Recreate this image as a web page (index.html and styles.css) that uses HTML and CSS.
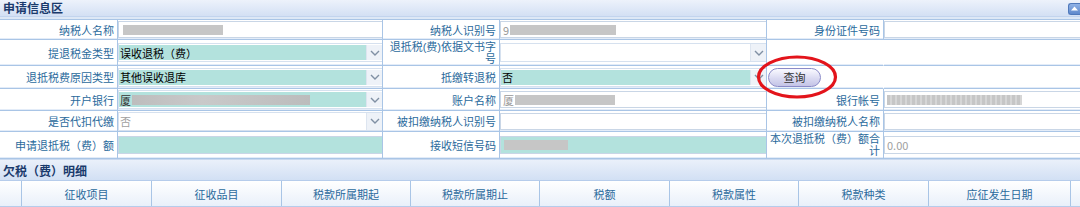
FILE: index.html
```html
<!DOCTYPE html>
<html lang="zh-CN">
<head>
<meta charset="utf-8">
<link rel="stylesheet" href="styles.css">
</head>
<body>
<div class="page">
  <div class="bar">
    <span class="bar-title">申请信息区</span>
    <span class="collapse"><svg width="11" height="11" viewBox="0 0 11 11"><path d="M2 7.5 L5.5 3.5 L9 7.5 Z" fill="#fff"/></svg></span>
  </div>
  <div class="band"></div>
  <div class="form">
    <!-- row 1 -->
    <div class="lbl">纳税人名称</div>
    <div class="val"><div class="inp"><span class="blur b1"></span></div></div>
    <div class="lbl">纳税人识别号</div>
    <div class="val"><div class="inp"><span class="ch grey">9</span><span class="blur b2"></span></div></div>
    <div class="lbl">身份证件号码</div>
    <div class="val"><div class="inp"></div></div>
    <!-- row 2 -->
    <div class="lbl">提退税金类型</div>
    <div class="val"><div class="sel teal"><span class="txt">误收退税（费）</span><span class="arr"><svg width="10" height="6" viewBox="0 0 10 6"><path d="M1 1 L5 5 L9 1" fill="none" stroke="#8090a4" stroke-width="1.4"/></svg></span></div></div>
    <div class="lbl wrap"><span class="ln">退抵税(费)依据文书字</span><span class="ln">号</span></div>
    <div class="val"><div class="sel"><span class="txt"></span><span class="arr"><svg width="10" height="6" viewBox="0 0 10 6"><path d="M1 1 L5 5 L9 1" fill="none" stroke="#8090a4" stroke-width="1.4"/></svg></span></div></div>
    <div class="lbl plain"></div>
    <div class="val"></div>
    <!-- row 3 -->
    <div class="lbl">退抵税费原因类型</div>
    <div class="val"><div class="sel teal"><span class="txt">其他误收退库</span><span class="arr"><svg width="10" height="6" viewBox="0 0 10 6"><path d="M1 1 L5 5 L9 1" fill="none" stroke="#8090a4" stroke-width="1.4"/></svg></span></div></div>
    <div class="lbl">抵缴转退税</div>
    <div class="val"><div class="sel teal"><span class="txt">否</span><span class="arr"><svg width="10" height="6" viewBox="0 0 10 6"><path d="M1 1 L5 5 L9 1" fill="none" stroke="#8090a4" stroke-width="1.4"/></svg></span></div></div>
    <div class="btncell plain"><span class="btn">查询</span></div>
    <div class="val"></div>
    <!-- row 4 -->
    <div class="lbl">开户银行</div>
    <div class="val"><div class="sel teal"><span class="txt"><span class="ch">厦</span><span class="blur b3"></span></span><span class="arr"><svg width="10" height="6" viewBox="0 0 10 6"><path d="M1 1 L5 5 L9 1" fill="none" stroke="#8090a4" stroke-width="1.4"/></svg></span></div></div>
    <div class="lbl">账户名称</div>
    <div class="val"><div class="inp"><span class="ch grey">厦</span><span class="blur b4"></span></div></div>
    <div class="lbl">银行帐号</div>
    <div class="val"><div class="inp"><span class="blur b5"></span></div></div>
    <!-- row 5 -->
    <div class="lbl">是否代扣代缴</div>
    <div class="val"><div class="sel"><span class="txt grey">否</span><span class="arr"><svg width="10" height="6" viewBox="0 0 10 6"><path d="M1 1 L5 5 L9 1" fill="none" stroke="#8090a4" stroke-width="1.4"/></svg></span></div></div>
    <div class="lbl">被扣缴纳税人识别号</div>
    <div class="val"><div class="inp"></div></div>
    <div class="lbl">被扣缴纳税人名称</div>
    <div class="val"><div class="inp"></div></div>
    <!-- row 6 -->
    <div class="lbl">申请退抵税（费）额</div>
    <div class="val"><div class="inp teal tall"></div></div>
    <div class="lbl">接收短信号码</div>
    <div class="val"><div class="inp teal tall"><span class="blur b6"></span></div></div>
    <div class="lbl wrap"><span class="ln">本次退抵税（费）额合</span><span class="ln">计</span></div>
    <div class="val"><div class="inp tall"><span class="grey">0.00</span></div></div>
  </div>
  <div class="bar bar2">
    <span class="bar-title">欠税（费）明细</span>
  </div>
  <div class="thead">
    <div class="th"></div>
    <div class="th">征收项目</div>
    <div class="th">征收品目</div>
    <div class="th">税款所属期起</div>
    <div class="th">税款所属期止</div>
    <div class="th">税额</div>
    <div class="th">税款属性</div>
    <div class="th">税款种类</div>
    <div class="th">应征发生日期</div>
    <div class="th"></div>
  </div>
  <svg class="mark" width="86" height="48" viewBox="0 0 86 48"><ellipse cx="42" cy="23" rx="38.5" ry="20" fill="none" stroke="#e3141b" stroke-width="3.2"/></svg>
</div>
</body>
</html>
```
FILE: styles.css
```css
* { box-sizing: border-box; }
html, body { margin: 0; padding: 0; background: #fff; }
body {
  font-family: "Noto Sans CJK SC", "Noto Sans", sans-serif;
  font-size: 11px;
  width: 1080px;
  height: 207px;
  overflow: hidden;
}
.page { position: relative; width: 1080px; }

.bar {
  height: 17px;
  display: flex;
  align-items: center;
  justify-content: space-between;
  padding: 0 0 0 3px;
  background: linear-gradient(#edf2fb, #d3e0f4);
  border-bottom: 1px solid #c2d4ee;
}
.bar-title {
  font-size: 12px;
  font-weight: bold;
  color: #1a3a6c;
  line-height: 14px;
}
.collapse {
  width: 12px;
  height: 12px;
  margin-top: 1px;
  border-radius: 3px 0 0 3px;
  background: linear-gradient(#8fb2e6, #5f89cc);
  border: 1px solid #4f79bb;
  border-right: none;
  display: flex;
  align-items: center;
  justify-content: center;
}
.band { height: 2px; background: #dde8f6; }

.form {
  display: grid;
  grid-template-columns: 118px 265px 117px 267px 117px 196px;
  grid-template-rows: 20px 26px 23px 22px 21px 27px;
  border-top: 1px solid #a9c5e6;
}
.form > div {
  border-right: 1px solid #a9c5e6;
  border-bottom: 1px solid #a9c5e6;
  box-shadow: inset 0 -1px 0 #e3ecf8;
}
.form > div:nth-child(6n) { border-right: none; }

.lbl {
  display: flex;
  align-items: center;
  justify-content: flex-end;
  text-align: right;
  padding-right: 3px;
  color: #2a6a9c;
  white-space: nowrap;
  line-height: 12px;
}
.lbl.wrap {
  flex-direction: column;
  align-items: flex-end;
  justify-content: center;
  font-family: "Liberation Sans", "Noto Sans CJK SC", sans-serif;
}
.lbl.wrap .ln { display: block; height: 12px; line-height: 12px; }
.lbl.plain, .btncell.plain { border-right-color: transparent !important; }

.val {
  display: flex;
  align-items: center;
  padding: 0;
}
.inp {
  width: 100%;
  height: 17px;
  border: 1px solid #c9d6e6;
  border-right: none;
  background: #fff;
  display: flex;
  align-items: center;
  padding-left: 2px;
  color: #000;
  overflow: hidden;
  white-space: nowrap;
}
.inp.tall { height: 18px; }
.teal { background: #b3e2dd !important; }

.sel {
  width: 100%;
  height: 19px;
  display: flex;
  align-items: stretch;
  background: #fff;
  border: 1px solid #d6e1ef;
  border-right: none;
}
.sel .txt {
  flex: 1;
  display: flex;
  align-items: center;
  padding-left: 1px;
  color: #000;
  white-space: nowrap;
  overflow: hidden;
}
.sel .txt.grey { color: #a0a0a0; }
.sel.teal .txt { background: #b3e2dd; }
.sel.teal { background: #fff !important; padding: 1px 0 1px 0; }
.sel .arr {
  width: 16px;
  flex: none;
  display: flex;
  align-items: center;
  justify-content: center;
  background: #eef2f8;
  border-left: 1px solid #dde5f0;
}
.grey { color: #a0a0a0; }
.ch { color: #333; }
.ch.grey { color: #999; }

.blur { display: inline-block; background: #c6c6c6; height: 10px; }
.b1 { width: 100px; margin-left: 2px; }
.b2 { width: 106px; margin-left: 1px; }
.b3 { width: 178px; margin-left: 1px; background: linear-gradient(90deg, #bdbdbd, #c9c9c9 40%, #bcbcbc); }
.b4 { width: 100px; margin-left: 1px; }
.b5 { width: 135px; background: repeating-linear-gradient(90deg, #c6c6c6 0 3px, #d6d6d6 3px 5px); }
.b6 { width: 64px; margin-left: 1px; }

.btncell {
  display: flex;
  align-items: center;
  padding-left: 1px;
}
.btn {
  width: 53px;
  height: 19px;
  border-radius: 10px;
  border: 1px solid #8a8ac8;
  background: linear-gradient(#fafaff, #dadaf2 55%, #c4c4e6);
  color: #333;
  font-size: 11px;
  display: flex;
  align-items: center;
  justify-content: center;
}

.bar2 {
  height: 22px;
  border-top: 1px solid #c9d9ef;
  background: linear-gradient(#eaf0fa, #d2e0f4);
  border-bottom: 1px solid #b6cceb;
}
.bar2 .bar-title { margin-top: 1px; }

.thead {
  display: grid;
  grid-template-columns: 22px 130px 130px 129px 129px 130px 129px 130px 142px 9px;
  height: 26px;
  background: linear-gradient(#ffffff, #e9f0fa);
  border-bottom: 1px solid #b6cceb;
}
.th {
  border-right: 1px solid #a9c5e6;
  display: flex;
  align-items: center;
  justify-content: center;
  color: #2a6a9c;
  font-size: 11px;
}
.th:last-child { border-right: none; }

.mark {
  position: absolute;
  left: 755px;
  top: 54px;
}
```
